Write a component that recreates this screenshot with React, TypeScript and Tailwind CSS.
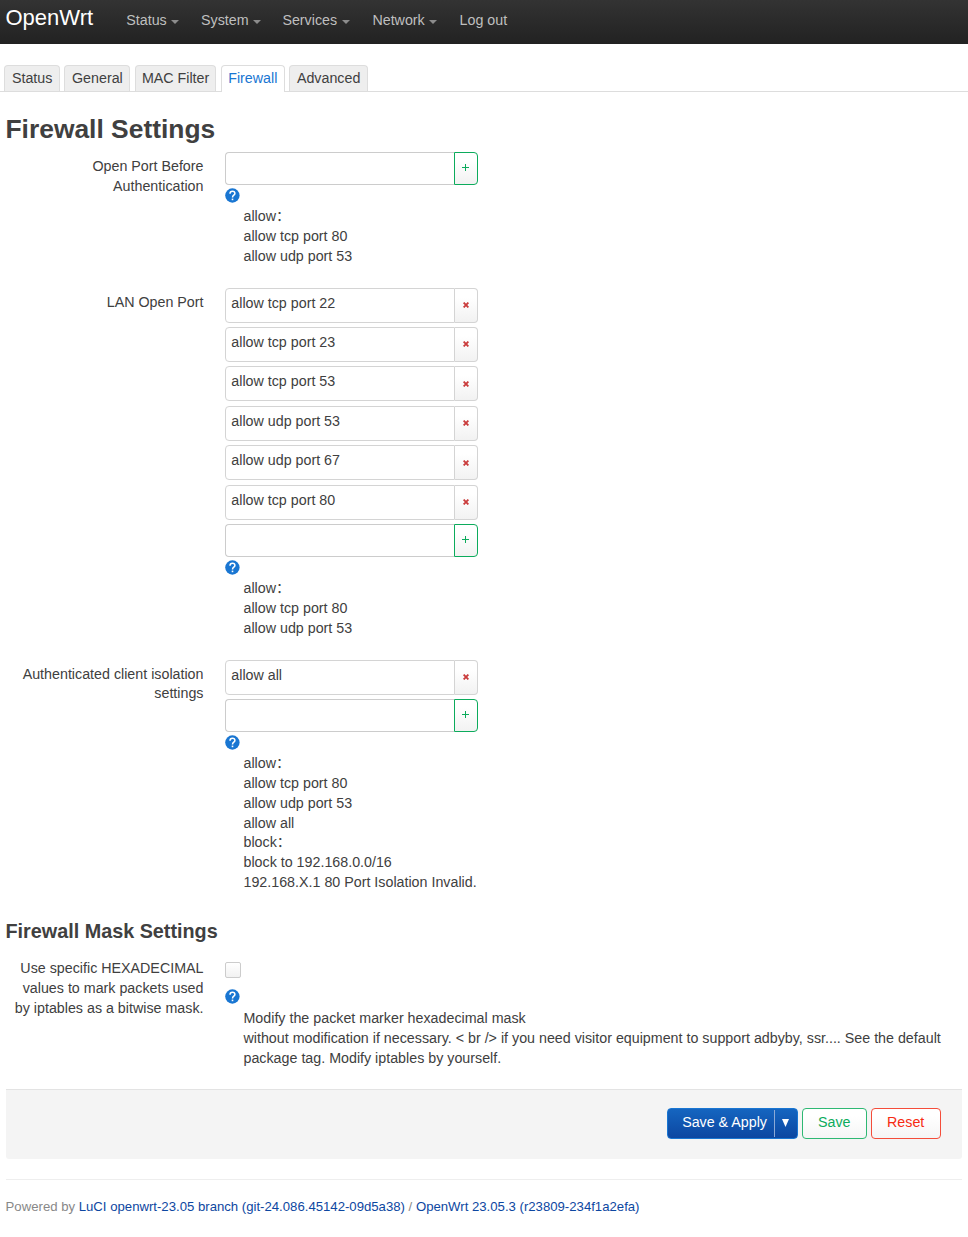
import React from "react";

const menu = [
  { label: "Status", box: "w-[74.8px]", caret: true },
  { label: "System", box: "w-[81.3px]", caret: true },
  { label: "Services", box: "w-[90px]", caret: true },
  { label: "Network", box: "w-[87.2px]", caret: true },
  { label: "Log out", box: "w-[60px]", caret: false },
];

const tabs = [
  { label: "Status", box: "w-[55.6px]" },
  { label: "General", box: "w-[66px]" },
  { label: "MAC Filter", box: "w-[81.6px]" },
  { label: "Firewall", box: "w-[64px]" },
  { label: "Advanced", box: "w-[79px]" },
];

function Caret() {
  return (
    <svg className="ml-[4.5px] mt-[3px]" width="8" height="4" viewBox="0 0 8 4">
      <path d="M0 0h8L4 4z" fill="#8c8c8c" />
    </svg>
  );
}

function Help() {
  return (
    <svg className="block h-[15px] w-[15px]" viewBox="0 0 15 15">
      <circle cx="7.4" cy="7.5" r="7.2" fill="#1976d2" />
      <path d="M5 5.7C5 4 6 3.2 7.4 3.2S9.9 4 9.9 5.4C9.9 7.2 7.5 7.2 7.5 9.4" fill="none" stroke="#fff" strokeWidth="1.5" />
      <rect x="6.7" y="10.6" width="1.6" height="1.6" fill="#fff" />
    </svg>
  );
}

function Entry({ value }: { value: string }) {
  return (
    <div className="mb-[4.4px] flex h-[35px] w-[252.5px]">
      <div className="flex-1 rounded-l-[4px] border border-[#d4d4d4] pl-[5px] leading-[29px]">{value}</div>
      <div className="flex w-[23px] items-center justify-center rounded-r-[4px] border border-l-0 border-[#d4d4d4] bg-linear-to-b from-white from-25% to-[#f2f2f2]">
        <svg width="6" height="6" viewBox="0 0 6 6">
          <path d="M.6.6l4.8 4.8M5.4.6L.6 5.4" stroke="#ca3c3c" strokeWidth="1.9" />
        </svg>
      </div>
    </div>
  );
}

function AddEntry() {
  return (
    <div className="flex h-[33px] w-[252.5px]">
      <div className="flex-1 rounded-l-[4px] border border-r-0 border-[#cccccc]" />
      <div className="flex w-[24px] items-center justify-center rounded-r-[4px] border border-[#0cab5c] bg-linear-to-b from-white from-25% to-[#f2f2f2]">
        <svg className="mb-0.5" width="7" height="7" viewBox="0 0 7 7">
          <path d="M3.5 0v7M0 3.5h7" stroke="#0cab5c" strokeWidth="1" />
        </svg>
      </div>
    </div>
  );
}

function Notes({ lines }: { lines: string[] }) {
  return (
    <div className="pl-[18.2px]">
      {lines.map((line, i) => (
        <div key={i} className="h-[19.8px] whitespace-nowrap leading-[19.8px]">{line}</div>
      ))}
    </div>
  );
}

function Row({ label, className, children }: { label: string[]; className: string; children: React.ReactNode }) {
  return (
    <div className={"flex " + className}>
      <div className="w-[203.5px] shrink-0 pt-[5px] text-right leading-[19.8px]">
        {label.map((l) => (
          <div key={l} className="whitespace-nowrap">{l}</div>
        ))}
      </div>
      <div className="ml-[21.8px]">{children}</div>
    </div>
  );
}

export default function App() {
  return (
    <div className="h-[1237px] w-[968px] overflow-hidden bg-white font-['Liberation_Sans','Noto_Sans_CJK_SC',sans-serif] text-[14.28px] text-[#404040]">
      <header className="flex h-[44px] bg-linear-to-b from-[#333333] to-[#222222]">
        <div className="w-[126.3px] pl-[5.5px] text-[22px] leading-[35px] text-white">OpenWrt</div>
        {menu.map((m) => (
          <div key={m.label} className={"flex h-[41px] items-center whitespace-nowrap text-[#bfbfbf] " + m.box}>
            <span>{m.label}</span>
            {m.caret && <Caret />}
          </div>
        ))}
      </header>

      <nav className="mt-[21px] flex h-[27px] gap-[4.4px] border-b border-[#dddddd] pl-[4.4px]">
        {tabs.map((t) => (
          <div
            key={t.label}
            className={
              "whitespace-nowrap rounded-t-[4px] border border-b-0 text-center leading-[24px] " +
              (t.label === "Firewall"
                ? "h-[27px] border-[#dddddd] bg-white text-[#1976d2] "
                : "h-[26px] border-[#dddddd] bg-[#eeeeee] ") +
              t.box
            }
          >
            {t.label}
          </div>
        ))}
      </nav>

      <main>
        <h2 className="mt-[17px] h-[43px] pl-[5.5px] text-[26.4px] font-bold leading-[40px]">Firewall Settings</h2>

        <Row label={["Open Port Before", "Authentication"]} className="h-[135.6px]">
          <AddEntry />
          <div className="h-[22.2px] pt-[3px]"><Help /></div>
          <Notes lines={["allow：", "allow tcp port 80", "allow udp port 53"]} />
        </Row>

        <Row label={["LAN Open Port"]} className="h-[372px]">
          {[
            "allow tcp port 22",
            "allow tcp port 23",
            "allow tcp port 53",
            "allow udp port 53",
            "allow udp port 67",
            "allow tcp port 80",
          ].map((v) => (
            <Entry key={v} value={v} />
          ))}
          <AddEntry />
          <div className="h-[22.2px] pt-[3px]"><Help /></div>
          <Notes lines={["allow：", "allow tcp port 80", "allow udp port 53"]} />
        </Row>

        <Row label={["Authenticated client isolation", "settings"]} className="h-[255.4px]">
          <Entry value="allow all" />
          <AddEntry />
          <div className="h-[22.2px] pt-[3px]"><Help /></div>
          <Notes
            lines={[
              "allow：",
              "allow tcp port 80",
              "allow udp port 53",
              "allow all",
              "block：",
              "block to 192.168.0.0/16",
              "192.168.X.1 80 Port Isolation Invalid.",
            ]}
          />
        </Row>

        <h3 className="h-[39px] pl-[5.5px] text-[19.8px] font-bold leading-[32px]">Firewall Mask Settings</h3>

        <Row
          label={["Use specific HEXADECIMAL", "values to mark packets used", "by iptables as a bitwise mask."]}
          className="h-[135px]"
        >
          <div className="mt-2 h-4 w-4 rounded-[2px] border border-[#cccccc] bg-linear-to-b from-white to-[#f2f2f2]" />
          <div className="h-[31px] pt-[11.5px]"><Help /></div>
          <Notes
            lines={[
              "Modify the packet marker hexadecimal mask",
              "without modification if necessary. < br /> if you need visitor equipment to support adbyby, ssr.... See the default",
              "package tag. Modify iptables by yourself.",
            ]}
          />
        </Row>

        <div className="mx-[6px] flex h-[70px] justify-end gap-[4.4px] rounded-b-[3px] border-t border-[#e3e3e3] bg-[#f4f4f4] pr-[21.5px] pt-[18px]">
          <div className="flex h-[31px] w-[131px] rounded-[4px] border border-[#1976d2] bg-linear-to-b from-[#1565c0] to-[#0d47a1] text-white">
            <div className="my-px w-[107px] border-r border-[#8ba9d6] pl-[14.5px] leading-[25px]">Save &amp; Apply</div>
            <div className="flex flex-1 items-center justify-center">
              <svg className="mb-px" width="7" height="8" viewBox="0 0 7 8">
                <path d="M0 0h7L3.5 8z" fill="#fff" />
              </svg>
            </div>
          </div>
          <div className="h-[31px] w-[64.5px] rounded-[4px] border border-[#2eb873] bg-linear-to-b from-white from-25% to-[#f5f5f5] text-center leading-[27px] text-[#0cab5c]">Save</div>
          <div className="h-[31px] w-[69.6px] rounded-[4px] border border-[#f44d3a] bg-linear-to-b from-white from-25% to-[#f5f5f5] text-center leading-[27px] text-[#f62b12]">Reset</div>
        </div>
      </main>

      <footer className="mx-[5.6px] mt-5 border-t border-[#eeeeee] pt-[17px] text-[13.16px] leading-[20px] text-[#888888]">
        Powered by <span className="text-[#0d47a1]">LuCI openwrt-23.05 branch (git-24.086.45142-09d5a38)</span> /{" "}
        <span className="text-[#0d47a1]">OpenWrt 23.05.3 (r23809-234f1a2efa)</span>
      </footer>
    </div>
  );
}
